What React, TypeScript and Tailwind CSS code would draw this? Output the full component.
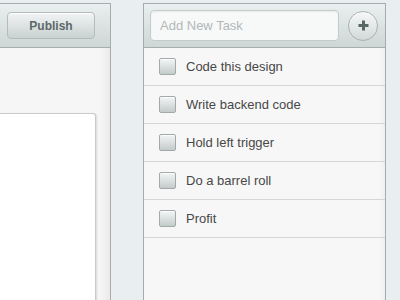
import React from "react";

const tasks = ["Code this design", "Write backend code", "Hold left trigger", "Do a barrel roll", "Profit"];

export default function App() {
  return (
    <div
      className="w-[400px] h-[300px] overflow-hidden bg-[#e9eef0] flex items-start pt-[3px]"
      style={{ fontFamily: '"Liberation Sans", Arial, sans-serif' }}
    >
      {/* Left panel */}
      <div className="w-[111px] h-[320px] shrink-0 flex flex-col border-t border-r border-[#a7abab] bg-[#f6f6f6] shadow-[inset_-10px_0_8px_-6px_rgba(0,0,0,0.06)]">
        <div className="h-[44px] shrink-0 flex items-center justify-end pr-[15px] border-b border-[#a7adad] bg-gradient-to-b from-[#eaefef] to-[#cdd7d6]">
          <button className="w-[88px] h-[27px] rounded-[4px] border border-[#b3bcbc] bg-gradient-to-b from-[#f2f4f4] to-[#c9d1d1] shadow-[inset_0_1px_0_rgba(255,255,255,0.9)] text-[12px] font-bold text-[#5b6969] flex items-center justify-center">
            Publish
          </button>
        </div>
        <div className="flex-1 pt-[65px] pr-[14px]">
          <div className="h-full bg-white rounded-tr-[3px] border-t border-r border-[#cacaca] shadow-[1px_1px_2px_rgba(0,0,0,0.12)]" />
        </div>
      </div>

      {/* Right panel */}
      <div className="ml-[32px] w-[243px] h-[320px] shrink-0 flex flex-col border-t border-l border-r border-[#a7abab] bg-[#f7f7f7] shadow-[inset_-6px_0_6px_-5px_rgba(0,0,0,0.06)]">
        <div className="h-[44px] shrink-0 flex items-center pl-[6px] pr-[7px] border-b border-[#a7adad] bg-gradient-to-b from-[#eaefef] to-[#cdd7d6]">
          <div className="w-[189px] h-[31px] rounded-[4px] border border-[#c3cbcb] bg-[#f7f8f8] shadow-[inset_0_1px_2px_rgba(0,0,0,0.06)] flex items-center pl-[9px] text-[13px] text-[#b2b8b8]">
            Add New Task
          </div>
          <div className="ml-auto w-[30px] h-[30px] rounded-full border border-[#a9b2b2] bg-gradient-to-b from-[#f6f8f8] to-[#d2d9d9] shadow-[inset_0_1px_0_rgba(255,255,255,0.9)] flex items-center justify-center">
            <svg width="11" height="11" viewBox="0 0 11 11">
              <rect x="4" y="0.5" width="3" height="10" fill="#586666" />
              <rect x="0.5" y="4" width="10" height="3" fill="#586666" />
            </svg>
          </div>
        </div>
        <div className="flex flex-col">
          {tasks.map((t) => (
            <div key={t} className="h-[38px] flex items-center border-b border-[#d6d6d6] pl-[15px]">
              <div className="w-[17px] h-[17px] rounded-[2px] border border-[#a3a9a9] bg-gradient-to-b from-[#f3f5f5] to-[#c4cbcb] shadow-[inset_0_1px_0_rgba(255,255,255,0.8)]" />
              <span className="ml-[10px] text-[13px] text-[#474747]">{t}</span>
            </div>
          ))}
        </div>
      </div>
    </div>
  );
}
